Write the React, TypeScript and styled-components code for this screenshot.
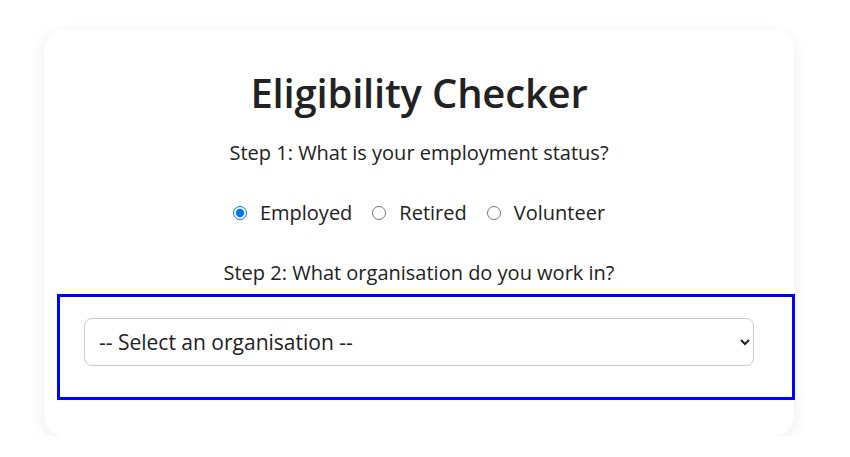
import React, { useState } from "react";
import styled, { createGlobalStyle } from "styled-components";

const Global = createGlobalStyle`
  html, body { margin: 0; padding: 0; background: #ffffff; }
  body { font-family: "Open Sans", "Noto Sans", sans-serif; color: #212121; }
`;

const Page = styled.div`
  padding: 30px 0 0 44px;
`;

const Card = styled.div`
  width: 750px;
  height: 406px;
  box-sizing: border-box;
  background: #fff;
  border-radius: 20px;
  box-shadow: 0 4px 16px rgba(0, 0, 0, 0.08);
  display: flex;
  flex-direction: column;
  align-items: center;
  padding-top: 40px;
`;

const Title = styled.h1`
  margin: 0;
  font-size: 40px;
  font-weight: 600;
  line-height: 46px;
  letter-spacing: -0.2px;
  color: #222;
`;

const Question = styled.p<{ $top: number }>`
  margin: ${(p) => p.$top}px 0 0;
  font-size: 20px;
  line-height: 24px;
  color: #222;
`;

const RadioRow = styled.div`
  display: flex;
  gap: 20px;
  margin-top: 36px;
`;

const RadioLabel = styled.label`
  display: flex;
  align-items: center;
  font-size: 20px;
  line-height: 24px;
  color: #222;
  input {
    margin: 0 13px 0 0;
    width: 14px;
    height: 14px;
  }
`;

const Highlight = styled.div`
  align-self: flex-start;
  margin: 9px 0 0 13px;
  width: 738px;
  height: 106px;
  box-sizing: border-box;
  border: 3px solid #0000ff;
  padding: 21px 38px 0 24px;
`;

const Select = styled.select`
  width: 100%;
  height: 48px;
  border: 1px solid #cccccc;
  border-radius: 8px;
  background: #fff;
  font-family: "Open Sans", "Noto Sans", sans-serif;
  font-size: 21px;
  color: #222;
  padding: 0 8px 0 10px;
`;

export default function App() {
  const [status, setStatus] = useState("employed");
  const options = [
    ["employed", "Employed"],
    ["retired", "Retired"],
    ["volunteer", "Volunteer"],
  ];
  return (
    <Page>
      <Global />
      <Card>
        <Title>Eligibility Checker</Title>
        <Question $top={25}>Step 1: What is your employment status?</Question>
        <RadioRow>
          {options.map(([v, l]) => (
            <RadioLabel key={v}>
              <input
                type="radio"
                name="status"
                value={v}
                checked={status === v}
                onChange={() => setStatus(v)}
              />
              {l}
            </RadioLabel>
          ))}
        </RadioRow>
        <Question $top={36}>Step 2: What organisation do you work in?</Question>
        <Highlight>
          <Select defaultValue="">
            <option value="">-- Select an organisation --</option>
          </Select>
        </Highlight>
      </Card>
    </Page>
  );
}
